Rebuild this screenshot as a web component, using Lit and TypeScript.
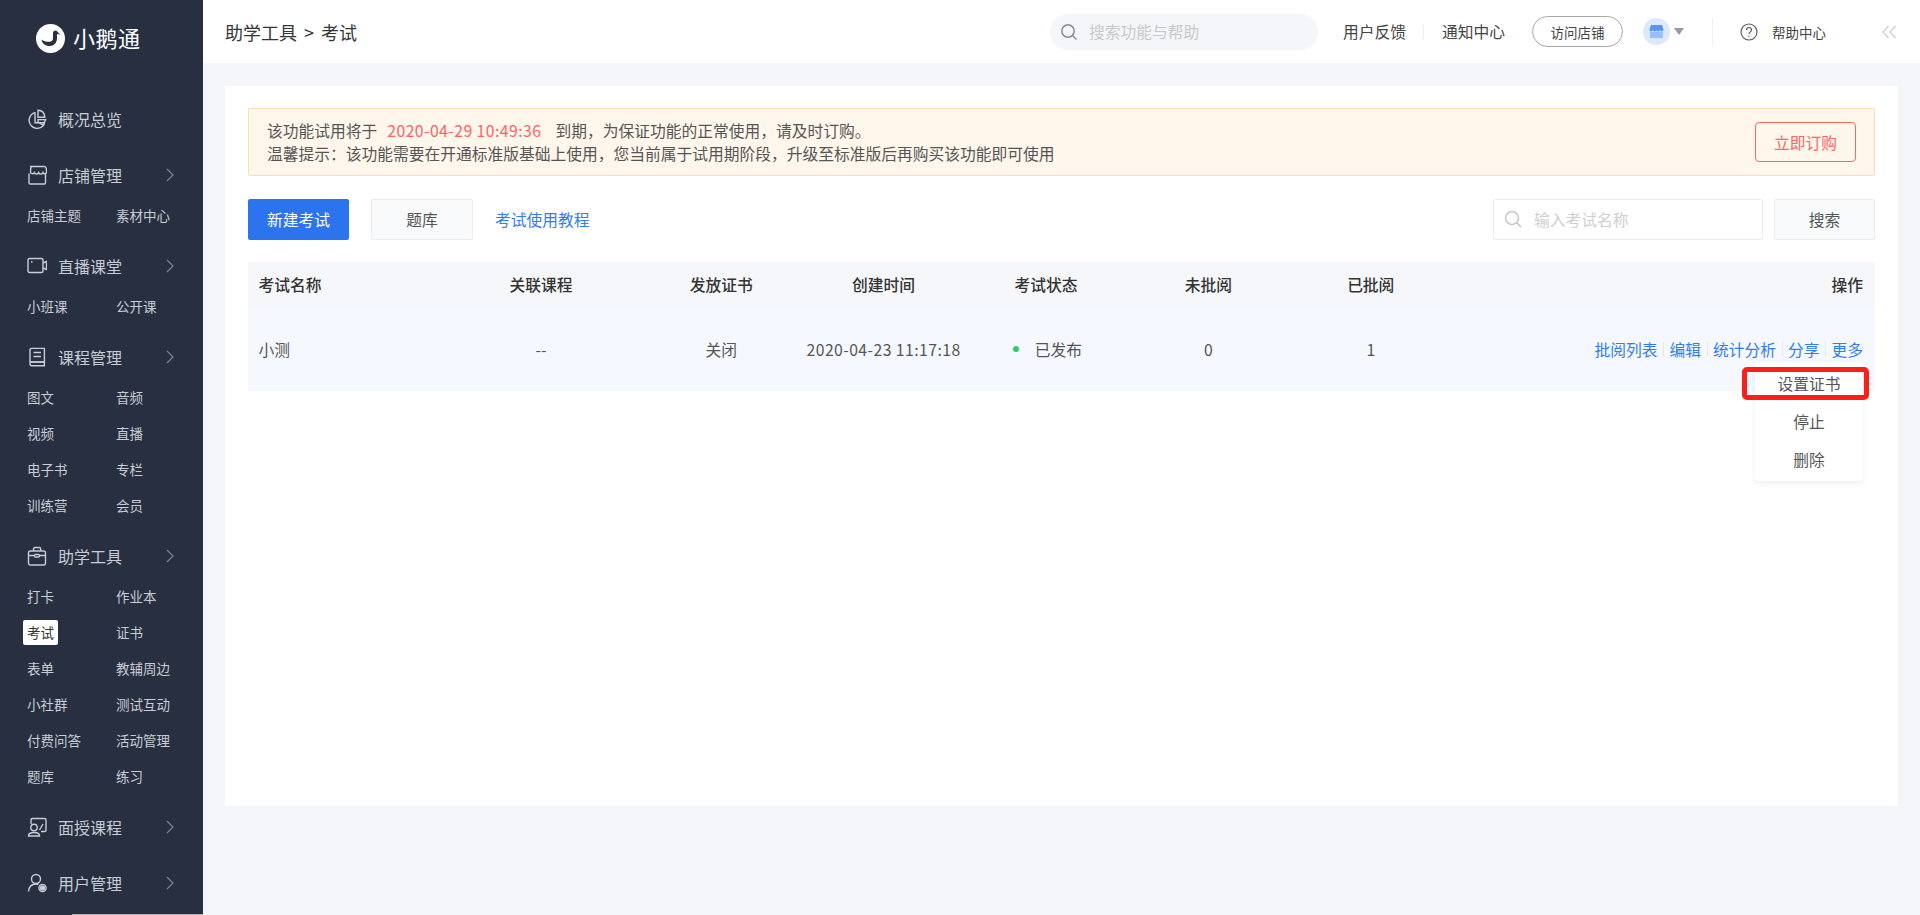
import { LitElement, html, css, svg } from "lit";
import { customElement } from "lit/decorators.js";

const icons: Record<string, unknown> = {
  overview: svg`<path d="M8 3.6a8 8 0 1 0 9.6 10.6" /><path d="M8 3.2v10.6h10" /><path d="M11 1.2c4 .2 6.6 3 6.8 7h-6.8z" /><path d="M11 10.6h7.6l-2.6 5.4-5-3z" />`,
  shop: svg`<path d="M3 1.5h14.5c1.2 0 1.6 1 1.8 2l.3 3.4c0 2-3 2.4-3.6.7-1 2-3.3 2-4.4 0-1 2-3.3 2-4.3 0-.7 1.7-3.8 1.3-3.8-.7l.2-3.4c.2-1 .6-2 1.8-2z" /><path d="M2 8.5v9.3c0 .8.5 1.2 1.2 1.2h14.1c.7 0 1.2-.4 1.2-1.2V8.5" />`,
  live: svg`<rect x="1" y="2.5" width="15" height="14" rx="1.5" /><path d="M16 7l3.5-1.5v8L16 12" /><path d="M4 6h1.5" />`,
  course: svg`<path d="M3 15V3c0-1 .6-1.6 1.6-1.6h12.8V15z" /><path d="M3 16.5c0-1 .6-1.5 1.6-1.5h12.8v3.8H4.6C3.6 18.8 3 18 3 16.5z" /><path d="M6.5 5.5h7.5M6.5 9.5h7.5" />`,
  tool: svg`<rect x="1.5" y="5" width="17" height="14" rx="2" /><path d="M6.5 5V3.2c0-1 .6-1.7 1.600-1.700h4c1 0 1.600.7 1.600 1.700V5" /><path d="M1.500 9.500h5.500M13 9.500h5.500" /><rect x="7.500" y="8.500" width="5" height="2.500" rx="1" />`,
  teach: svg`<path d="M4 7V3c0-1 .6-1.500 1.500-1.500h12c.9 0 1.500.5 1.500 1.500v10c0 1-.6 1.500-1.500 1.500H14" /><circle cx="7" cy="10.500" r="3.200" /><path d="M1.500 19c0-2.500 2-3.500 5.500-3.500s5.500 1 5.500 3.500z" /><path d="M12.500 13l3.500-6" />`,
  user: svg`<circle cx="9" cy="6" r="4.500" /><path d="M1.500 18.500c.4-4.500 3.200-7.500 7.500-7.500 1 0 1.800.2 2.500.5" /><circle cx="15.500" cy="15" r="2" fill="#c8ccd4" /><circle cx="15.500" cy="15" r="3.600" />`,
};

const menu: { key: string; title: string; subs?: string[] }[] = [
  { key: "overview", title: "概况总览" },
  { key: "shop", title: "店铺管理", subs: ["店铺主题", "素材中心"] },
  { key: "live", title: "直播课堂", subs: ["小班课", "公开课"] },
  { key: "course", title: "课程管理", subs: ["图文", "音频", "视频", "直播", "电子书", "专栏", "训练营", "会员"] },
  {
    key: "tool",
    title: "助学工具",
    subs: ["打卡", "作业本", "考试", "证书", "表单", "教辅周边", "小社群", "测试互动", "付费问答", "活动管理", "题库", "练习"],
  },
  { key: "teach", title: "面授课程" },
  { key: "user", title: "用户管理" },
];

@customElement("side-nav")
export class SideNav extends LitElement {
  static styles = css`
    :host {
      display: block;
      position: relative;
      width: 203px;
      height: 915px;
      flex: none;
      overflow: hidden;
      background: #272f41;
      color: #c8ccd4;
    }
    .logo {
      display: flex;
      align-items: center;
      height: 76px;
      padding: 0 0 0 36px;
      gap: 8px;
      margin-bottom: 23px;
      color: #fff;
      font-size: 22px;
      letter-spacing: 0.5px;
    }
    .logo span {
      position: relative;
      top: -1px;
    }
    .logo svg {
      width: 29px;
      height: 29px;
    }
    .head {
      display: flex;
      align-items: center;
      height: 40px;
      padding-left: 27px;
      font-size: 16px;
    }
    .head svg.ic {
      width: 20px;
      height: 20px;
      margin-right: 11px;
      fill: none;
      stroke: #c8ccd4;
      stroke-width: 1.4;
    }
    .head svg.arr {
      margin-left: auto;
      margin-right: 29px;
      width: 8px;
      height: 14px;
      fill: none;
      stroke: #7b8597;
      stroke-width: 1.2;
    }
    .alone {
      margin-bottom: 16px;
    }
    .subs {
      display: grid;
      grid-template-columns: 89px 89px;
      grid-auto-rows: 36px;
      margin: 2px 0 13px 27px;
      font-size: 13.5px;
    }
    .subs span {
      display: flex;
      align-items: center;
      justify-self: start;
    }
    .subs .on {
      position: relative;
      z-index: 0;
      color: #333;
    }
    .subs .on::before {
      content: "";
      position: absolute;
      z-index: -1;
      left: -4px;
      right: -4px;
      top: 6px;
      bottom: 5px;
      background: #fff;
      border-radius: 2px;
    }
    .thumb {
      position: absolute;
      left: 72px;
      right: 0;
      bottom: 0;
      height: 1px;
      background: #b4b4b4;
    }
  `;
  render() {
    return html`<div class="logo">
        <svg viewBox="0 0 29 29">
          <circle cx="14.5" cy="14.5" r="14.5" fill="#fff" />
          <path
            d="M5.5 15.500c.5 4 3.800 6.500 8 6.500 4.500 0 7.500-3.500 7.500-7.500V10l3 .5-2.700-3c-1.500-2-4.300-1-4.300 1.500V14c0 2-1 3.500-3 3.800-2.700.3-6.500-.3-8.500-2.300z"
            fill="#272f41"
          />
        </svg>
        <span>小鹅通</span>
      </div>
      ${menu.map(
        (m) => html`<div class="head ${m.subs ? "" : "alone"}">
            <svg class="ic" viewBox="0 0 20 20">${icons[m.key]}</svg>
            ${m.title}
            ${m.key === "overview"
              ? ""
              : html`<svg class="arr" viewBox="0 0 8 14"><path d="M1 1l6 6-6 6" /></svg>`}
          </div>
          ${m.subs
            ? html`<div class="subs">
                ${m.subs.map((s) => html`<span class=${s === "考试" ? "on" : ""}>${s}</span>`)}
              </div>`
            : ""}`
      )}
      <div class="thumb"></div>`;
  }
}

@customElement("top-bar")
export class TopBar extends LitElement {
  static styles = css`
    :host {
      display: flex;
      align-items: center;
      height: 63px;
      background: #fff;
      padding: 0 23px 0 22px;
      color: #444;
      font-size: 15.75px;
    }
    .crumb {
      font-size: 18px;
      color: #353535;
      margin-right: auto;
    }
    .crumb b {
      font-weight: 400;
      margin: 0 3px;
    }
    .search {
      display: flex;
      align-items: center;
      width: 268px;
      height: 36px;
      border-radius: 18px;
      background: #f5f6fa;
      padding-left: 10px;
      box-sizing: border-box;
      color: #c9c9c9;
    }
    .search svg {
      width: 18px;
      height: 18px;
      margin-right: 11px;
      fill: none;
      stroke: #8b8b8b;
      stroke-width: 1.5;
    }
    .fb {
      margin-left: 25px;
    }
    .sep {
      width: 1px;
      height: 14px;
      background: #ececec;
      margin: 0 18px 0 17px;
    }
    .visit {
      display: flex;
      align-items: center;
      justify-content: center;
      width: 91px;
      height: 31px;
      margin-left: 27px;
      box-sizing: border-box;
      border: 1px solid #a8a8a8;
      border-radius: 16px;
      font-size: 13.5px;
      background: #fff;
    }
    .shop {
      display: flex;
      align-items: center;
      justify-content: center;
      width: 27px;
      height: 27px;
      margin-left: 20px;
      border-radius: 50%;
      background: #dce9fd;
    }
    .shop svg {
      width: 15px;
      height: 15px;
    }
    .caret {
      width: 0;
      height: 0;
      margin-left: 4px;
      border-left: 5.5px solid transparent;
      border-right: 5.5px solid transparent;
      border-top: 7px solid #9a9a9a;
    }
    .rule {
      width: 1px;
      height: 27px;
      background: #f0f0f0;
      margin: 0 27px 0 28px;
    }
    .help {
      width: 18px;
      height: 18px;
      margin-right: 14px;
    }
    .hc {
      font-size: 13.5px;
      color: #444;
    }
    .fold {
      width: 16px;
      height: 14px;
      margin-left: 55px;
      fill: none;
      stroke: #c9ced8;
      stroke-width: 1.2;
    }
  `;
  render() {
    return html`<div class="crumb">助学工具<b> &gt; </b>考试</div>
      <div class="search">
        <svg viewBox="0 0 18 18"><circle cx="8" cy="8" r="6.2" /><path d="M12.5 12.5L16.5 16.5" /></svg>
        搜索功能与帮助
      </div>
      <span class="fb">用户反馈</span>
      <i class="sep"></i>
      <span>通知中心</span>
      <div class="visit">访问店铺</div>
      <div class="shop">
        <svg viewBox="0 0 15 15">
          <path d="M1 7.5h13V14H1z" fill="#9bbefb" />
          <path d="M2 1h11l1.5 4.2c0 2.4-2.5 2.400-3.500 1-1 1.400-2.500 1.400-3.500 0-1 1.400-2.500 1.400-3.500 0-1 1.400-3.500 1.400-3.500-1z" fill="#5b93f5" />
        </svg>
      </div>
      <i class="caret"></i>
      <i class="rule"></i>
      <svg class="help" viewBox="0 0 18 18" fill="none" stroke="#555" stroke-width="1.1">
        <circle cx="9" cy="9" r="8" />
        <path d="M6.500 7c0-1.500 1.100-2.500 2.500-2.500S11.500 5.500 11.500 7c0 1.800-2.500 2-2.500 4" />
        <path d="M9 12.500v1.300" />
      </svg>
      <span class="hc">帮助中心</span>
      <svg class="fold" viewBox="0 0 16 14"><path d="M7.500 1L2 7l5.500 6M14.500 1L9 7l5.500 6" /></svg>`;
  }
}

@customElement("exam-table")
export class ExamTable extends LitElement {
  static styles = css`
    :host {
      display: block;
      position: relative;
      font-size: 15.75px;
    }
    .row {
      display: grid;
      grid-template-columns: 194px 198px repeat(5, 162.4px) 1fr;
      align-items: center;
      text-align: center;
    }
    .row > :first-child {
      text-align: left;
      padding-left: 10.5px;
    }
    .row > :last-child {
      text-align: right;
      padding-right: 12px;
    }
    .thead {
      height: 45px;
      padding-bottom: 1px;
      box-sizing: border-box;
      background: #f6f7fa;
      color: #333;
      font-weight: 500;
    }
    .tbody {
      height: 84px;
      background: #f5f9ff;
      color: #555;
    }
    .num {
      letter-spacing: 0.45px;
    }
    .status {
      display: flex;
      align-items: center;
      justify-content: flex-start;
      padding-left: 48px;
    }
    .dot {
      width: 6px;
      height: 6px;
      border-radius: 50%;
      background: #2bd06b;
      margin-right: 16px;
    }
    .acts {
      display: flex;
      justify-content: flex-end;
      align-items: center;
      gap: 5.5px;
      color: #2f7df0;
    }
    .acts i {
      width: 1px;
      height: 14px;
      background: #e3e8ef;
    }
    .drop {
      position: absolute;
      left: 1507px;
      top: 100px;
      width: 108px;
      padding: 3px 0 2px;
      background: #fff;
      border-radius: 4px;
      box-shadow: 0 2px 6px rgba(0, 0, 0, 0.07);
      color: #555;
      text-align: center;
    }
    .drop div {
      height: 38px;
      line-height: 38px;
    }
    .mark {
      position: absolute;
      left: 1494px;
      top: 105px;
      width: 127px;
      height: 33px;
      box-sizing: border-box;
      border: 5px solid #fa2015;
      border-radius: 5px;
    }
  `;
  render() {
    return html`<div class="row thead">
        <div>考试名称</div>
        <div>关联课程</div>
        <div>发放证书</div>
        <div>创建时间</div>
        <div>考试状态</div>
        <div>未批阅</div>
        <div>已批阅</div>
        <div>操作</div>
      </div>
      <div class="row tbody">
        <div>小测</div>
        <div>--</div>
        <div>关闭</div>
        <div class="num">2020-04-23 11:17:18</div>
        <div class="status"><span class="dot"></span>已发布</div>
        <div>0</div>
        <div>1</div>
        <div class="acts">
          <span>批阅列表</span><i></i><span>编辑</span><i></i><span>统计分析</span><i></i><span>分享</span><i></i><span>更多</span>
        </div>
      </div>
      <div class="drop">
        <div>设置证书</div>
        <div>停止</div>
        <div>删除</div>
      </div>
      <div class="mark"></div>`;
  }
}

@customElement("app-root")
export class AppRoot extends LitElement {
  static styles = css`
    :host {
      display: flex;
      width: 1920px;
      height: 915px;
      overflow: hidden;
      background: #f5f6fa;
      font-family: "Noto Sans CJK SC", "Liberation Sans", sans-serif;
      color: #444;
    }
    .main {
      flex: 1;
      min-width: 0;
    }
    .card {
      margin: 23px 22px 0;
      height: 720px;
      box-sizing: border-box;
      padding: 22px 23px;
      background: #fff;
      font-size: 15.75px;
    }
    .notice {
      display: flex;
      align-items: center;
      justify-content: space-between;
      height: 68px;
      box-sizing: border-box;
      padding: 0 18px 0 18px;
      background: #fff6ec;
      border: 1px solid #fbdfb1;
      border-radius: 2px;
      color: #555;
      line-height: 23px;
    }
    .red {
      color: #ff6363;
      margin: 0 14px 0 10px;
      letter-spacing: 0.45px;
    }
    .buy {
      display: flex;
      align-items: center;
      justify-content: center;
      width: 101px;
      height: 40px;
      box-sizing: border-box;
      border: 1px solid #ff6565;
      border-radius: 4px;
      color: #ff6565;
    }
    .tools {
      display: flex;
      align-items: center;
      margin: 22px 0;
      height: 42px;
    }
    .btn {
      display: flex;
      align-items: center;
      justify-content: center;
      width: 101px;
      height: 41px;
      box-sizing: border-box;
      border-radius: 2px;
    }
    .primary {
      background: #2b74ee;
      color: #fff;
    }
    .plain {
      background: #f9fafc;
      border: 1px solid #ececec;
      color: #555;
    }
    .bank {
      margin-left: 22px;
      width: 102px;
    }
    .link {
      margin-left: 22px;
      color: #2f7df0;
      margin-right: auto;
    }
    .input {
      display: flex;
      align-items: center;
      width: 270px;
      height: 41px;
      box-sizing: border-box;
      border: 1px solid #ececec;
      border-radius: 2px;
      padding-left: 10px;
      color: #cfcfcf;
    }
    .input svg {
      width: 18px;
      height: 18px;
      margin-right: 12px;
      fill: none;
      stroke: #c8c8c8;
      stroke-width: 1.6;
    }
    .go {
      margin-left: 11px;
    }
  `;
  render() {
    return html`<side-nav></side-nav>
      <div class="main">
        <top-bar></top-bar>
        <div class="card">
          <div class="notice">
            <div>
              <div>该功能试用将于<span class="red">2020-04-29 10:49:36</span>到期，为保证功能的正常使用，请及时订购。</div>
              <div>温馨提示：该功能需要在开通标准版基础上使用，您当前属于试用期阶段，升级至标准版后再购买该功能即可使用</div>
            </div>
            <div class="buy">立即订购</div>
          </div>
          <div class="tools">
            <div class="btn primary">新建考试</div>
            <div class="btn plain bank">题库</div>
            <div class="link">考试使用教程</div>
            <div class="input">
              <svg viewBox="0 0 18 18"><circle cx="8" cy="8" r="6.5" /><path d="M12.5 12.5L17 17" /></svg>
              输入考试名称
            </div>
            <div class="btn plain go">搜索</div>
          </div>
          <exam-table></exam-table>
        </div>
      </div>`;
  }
}
